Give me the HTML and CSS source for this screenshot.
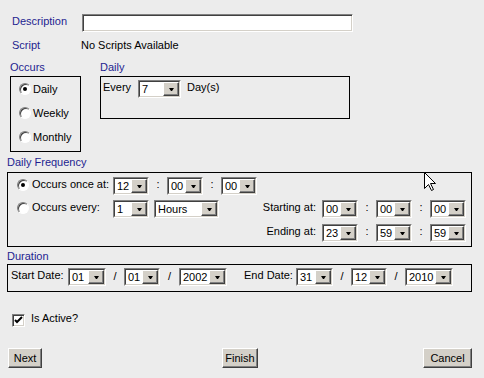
FILE: index.html
```html
<!DOCTYPE html>
<html lang="en">
<head>
    <meta charset="UTF-8">
    <meta name="viewport" content="width=device-width, initial-scale=1.0">
    <title>Schedule</title>
    <link rel="stylesheet" href="styles.css">
</head>
<body>
    <div class="page">
        <div class="row-desc">
            <span class="lbl blue">Description</span>
            <div class="textbox"></div>
        </div>
        <div class="row-script">
            <span class="lbl blue">Script</span>
            <span>No Scripts Available</span>
        </div>

        <div class="top-section">
            <div class="occurs-col">
                <div class="sec-label blue">Occurs</div>
                <div class="occurs-box">
                    <div class="opt"><span class="radio checked"></span><span>Daily</span></div>
                    <div class="opt"><span class="radio"></span><span>Weekly</span></div>
                    <div class="opt"><span class="radio"></span><span>Monthly</span></div>
                </div>
            </div>
            <div class="daily-col">
                <div class="sec-label blue">Daily</div>
                <div class="daily-box">
                    <span class="every">Every</span>
                    <div class="sel w43"><div class="sel-in"><span class="val">7</span><span class="arr"><i></i></span></div></div>
                    <span class="days">Day(s)</span>
                </div>
            </div>
        </div>

        <div class="sec-label blue df-label">Daily Frequency</div>
        <div class="df-box">
            <div class="df-row">
                <span class="radio checked"></span>
                <span class="df-text">Occurs once at:</span>
                <div class="sel w36"><div class="sel-in"><span class="val">12</span><span class="arr"><i></i></span></div></div>
                <span class="sep">:</span>
                <div class="sel w36"><div class="sel-in"><span class="val">00</span><span class="arr"><i></i></span></div></div>
                <span class="sep">:</span>
                <div class="sel w36"><div class="sel-in"><span class="val">00</span><span class="arr"><i></i></span></div></div>
            </div>
            <div class="df-row row-2">
                <span class="radio"></span>
                <span class="df-text">Occurs every:</span>
                <div class="sel w36"><div class="sel-in"><span class="val">1</span><span class="arr"><i></i></span></div></div>
                <div class="sel w65 hours"><div class="sel-in"><span class="val">Hours</span><span class="arr"><i></i></span></div></div>
                <div class="range">
                    <span class="range-lbl">Starting at:</span>
                    <div class="sel w36"><div class="sel-in"><span class="val">00</span><span class="arr"><i></i></span></div></div>
                    <span class="sep">:</span>
                    <div class="sel w36"><div class="sel-in"><span class="val">00</span><span class="arr"><i></i></span></div></div>
                    <span class="sep">:</span>
                    <div class="sel w36"><div class="sel-in"><span class="val">00</span><span class="arr"><i></i></span></div></div>
                </div>
            </div>
            <div class="df-row row-3">
                <div class="range">
                    <span class="range-lbl">Ending at:</span>
                    <div class="sel w36"><div class="sel-in"><span class="val">23</span><span class="arr"><i></i></span></div></div>
                    <span class="sep">:</span>
                    <div class="sel w36"><div class="sel-in"><span class="val">59</span><span class="arr"><i></i></span></div></div>
                    <span class="sep">:</span>
                    <div class="sel w36"><div class="sel-in"><span class="val">59</span><span class="arr"><i></i></span></div></div>
                </div>
            </div>
        </div>

        <div class="sec-label blue dur-label">Duration</div>
        <div class="dur-box">
            <span class="date-lbl">Start Date:</span>
            <div class="sel w38"><div class="sel-in"><span class="val">01</span><span class="arr"><i></i></span></div></div>
            <span class="slash">/</span>
            <div class="sel w36"><div class="sel-in"><span class="val">01</span><span class="arr"><i></i></span></div></div>
            <span class="slash wide">/</span>
            <div class="sel w48"><div class="sel-in"><span class="val">2002</span><span class="arr"><i></i></span></div></div>
            <span class="date-lbl end">End Date:</span>
            <div class="sel w37"><div class="sel-in"><span class="val">31</span><span class="arr"><i></i></span></div></div>
            <span class="slash">/</span>
            <div class="sel w36"><div class="sel-in"><span class="val">12</span><span class="arr"><i></i></span></div></div>
            <span class="slash">/</span>
            <div class="sel w48"><div class="sel-in"><span class="val">2010</span><span class="arr"><i></i></span></div></div>
        </div>

        <div class="row-check">
            <span class="checkbox">
                <svg width="9" height="9" viewBox="0 0 9 9"><polyline points="1,4 3,6 8,1" fill="none" stroke="#000" stroke-width="2"/></svg>
            </span>
            <span class="check-lbl">Is Active?</span>
        </div>

        <div class="buttons">
            <button class="btn next">Next</button>
            <button class="btn finish">Finish</button>
            <button class="btn cancel">Cancel</button>
        </div>

        <svg class="cursor" width="13" height="20" viewBox="0 0 13 20">
            <path d="M0.5 0.5 L0.5 16.5 L4.5 12.5 L7.5 18.5 L9.5 17.5 L6.5 11.5 L11.5 11.5 Z" fill="#fff" stroke="#000" stroke-width="1"/>
        </svg>
    </div>
</body>
</html>
```
FILE: styles.css
```css
body {
    margin: 0;
    background: #ececec;
    font-family: "Liberation Sans", Arial, sans-serif;
    font-size: 11px;
    color: #000;
}
.page {
    position: relative;
    width: 484px;
    height: 378px;
    padding-top: 14px;
    box-sizing: border-box;
    overflow: hidden;
}
.blue {
    color: #1e1e90;
}

/* header rows */
.row-desc {
    display: flex;
    align-items: flex-start;
    height: 18px;
    line-height: 14px;
}
.row-desc .lbl {
    width: 70px;
    margin-left: 12px;
}
.textbox {
    width: 271px;
    height: 18px;
    box-sizing: border-box;
    background: #fff;
    border: 1px solid;
    border-color: #808080 #fff #fff #808080;
    box-shadow: inset 1px 1px #404040, inset -1px -1px #d4d0c8;
}
.row-script {
    display: flex;
    margin-top: 6px;
    height: 14px;
    line-height: 14px;
}
.row-script .lbl {
    width: 69px;
    margin-left: 12px;
}

/* occurs + daily */
.top-section {
    display: flex;
    margin-top: 8px;
}
.sec-label {
    height: 14px;
    line-height: 14px;
    margin-bottom: 2px;
}
.occurs-col {
    margin-left: 10px;
    width: 71px;
}
.occurs-box {
    width: 71px;
    height: 76px;
    box-sizing: border-box;
    border: 1px solid #000;
    padding: 3px 0 0 8px;
}
.opt {
    display: flex;
    align-items: center;
    height: 18px;
    margin-bottom: 6px;
}
.opt .radio {
    margin-right: 2px;
}
.daily-col {
    margin-left: 19px;
}
.daily-box {
    display: flex;
    align-items: flex-start;
    width: 250px;
    height: 43px;
    box-sizing: border-box;
    border: 1px solid #000;
    padding: 3px 0 0 2px;
    line-height: 14px;
}
.every {
    width: 35px;
}
.days {
    margin-left: 6px;
}

/* radio */
.radio {
    position: relative;
    display: inline-block;
    width: 12px;
    height: 12px;
    box-sizing: border-box;
    border-radius: 50%;
    background: #fff;
    border: 1px solid;
    border-color: #808080 #fff #fff #808080;
    box-shadow: inset 1px 1px #404040;
    flex-shrink: 0;
}
.radio.checked::after {
    content: "";
    position: absolute;
    left: 3px;
    top: 3px;
    width: 4px;
    height: 4px;
    border-radius: 50%;
    background: #000;
}

/* combo boxes */
.sel {
    height: 18px;
    box-sizing: border-box;
    border: 1px solid;
    border-color: #808080 #fff #fff #808080;
    flex-shrink: 0;
}
.sel-in {
    display: flex;
    height: 100%;
    box-sizing: border-box;
    border: 1px solid;
    border-color: #404040 #d4d0c8 #d4d0c8 #404040;
    background: #fff;
}
.val {
    flex: 1;
    padding-left: 2px;
    line-height: 15px;
    white-space: nowrap;
    overflow: hidden;
}
.arr {
    display: flex;
    align-items: center;
    justify-content: center;
    width: 16px;
    box-sizing: border-box;
    background: #d4d0c8;
    border: 1px solid;
    border-color: #fff #404040 #404040 #fff;
    box-shadow: inset -1px -1px #808080;
}
.arr i {
    width: 1px;
    height: 0;
    border-top: 3px solid #000;
    border-left: 2px solid transparent;
    border-right: 2px solid transparent;
    margin-top: 1px;
}
.w36 { width: 36px; }
.w37 { width: 37px; }
.w38 { width: 38px; }
.w43 { width: 43px; }
.w48 { width: 48px; }
.w65 { width: 65px; }

/* daily frequency */
.df-label {
    margin: 3px 0 3px 7px;
}
.df-box {
    margin-left: 7px;
    width: 465px;
    height: 75px;
    box-sizing: border-box;
    border: 1px solid #000;
    padding: 4px 5px 0 9px;
}
.df-row {
    display: flex;
    align-items: flex-start;
    height: 18px;
    line-height: 14px;
}
.df-row .radio {
    margin: 2px 3px 0 0;
}
.row-2 {
    margin-top: 5px;
}
.row-3 {
    margin-top: 6px;
    justify-content: flex-end;
}
.df-text {
    width: 81px;
}
.sep {
    width: 18px;
    text-align: center;
}
.hours {
    margin-left: 5px;
}
.range {
    display: flex;
    align-items: flex-start;
    margin-left: auto;
}
.range-lbl {
    width: 70px;
    margin-right: 6px;
    text-align: right;
}

/* duration */
.dur-label {
    margin: 2px 0 1px 7px;
}
.dur-box {
    display: flex;
    align-items: flex-start;
    margin-left: 7px;
    width: 465px;
    height: 28px;
    box-sizing: border-box;
    border: 1px solid #000;
    padding: 3px 0 0 3px;
    line-height: 14px;
}
.date-lbl {
    width: 57px;
}
.date-lbl.end {
    width: 52px;
    margin-left: 17px;
}
.slash {
    width: 18px;
    text-align: center;
    padding-top: 1px;
}
.slash.wide {
    width: 19px;
}

/* active */
.row-check {
    display: flex;
    align-items: flex-start;
    margin: 22px 0 0 12px;
}
.checkbox {
    display: flex;
    align-items: center;
    justify-content: center;
    width: 13px;
    height: 13px;
    box-sizing: border-box;
    background: #fff;
    border: 1px solid;
    border-color: #808080 #fff #fff #808080;
    box-shadow: inset 1px 1px #404040, inset -1px -1px #d4d0c8;
}
.check-lbl {
    margin: -3px 0 0 6px;
    line-height: 14px;
}

/* buttons */
.buttons {
    display: flex;
    margin-top: 21px;
    padding: 0 12px 0 8px;
}
.btn {
    height: 20px;
    padding: 0;
    font-family: inherit;
    font-size: 11px;
    color: #000;
    background: #d4d0c8;
    border: 1px solid;
    border-color: #fff #404040 #404040 #fff;
    box-shadow: inset -1px -1px #808080;
}
.next { width: 34px; }
.finish { width: 36px; margin-left: 180px; }
.cancel { width: 49px; margin-left: auto; }

.cursor {
    position: absolute;
    left: 424px;
    top: 172px;
}
```
